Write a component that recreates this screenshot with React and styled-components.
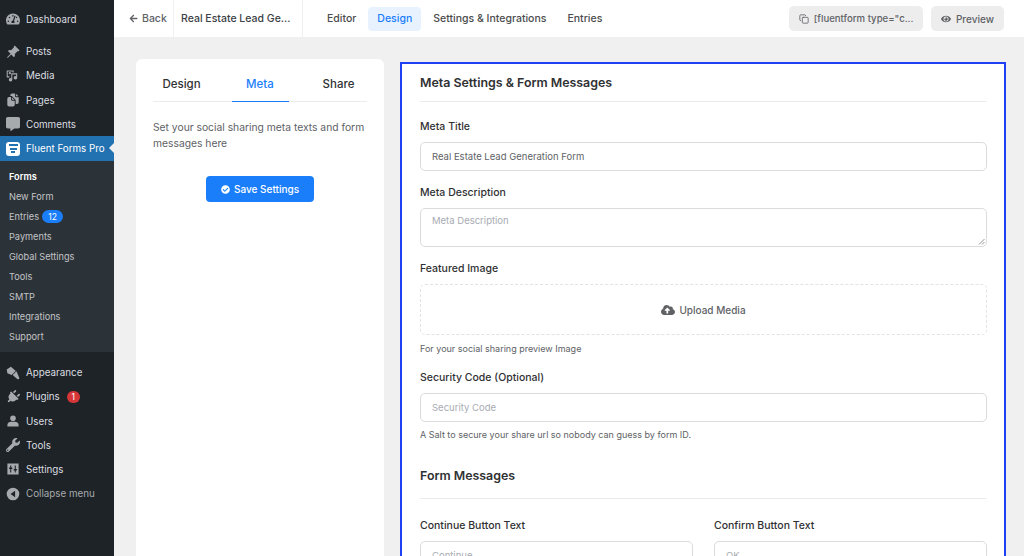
import React from "react";
import styled, { createGlobalStyle } from "styled-components";
import {
  FaTachometerAlt,
  FaCommentAlt,
  FaPlug,
  FaWrench,
  FaEye,
  FaCloudUploadAlt,
  FaCheckCircle,
  FaArrowLeft,
} from "react-icons/fa";
import { BsPinAngleFill } from "react-icons/bs";
import { IoDocuments } from "react-icons/io5";
import { LuCopy } from "react-icons/lu";

const GlobalStyle = createGlobalStyle`
  html, body {
    margin: 0;
    padding: 0;
    height: 100%;
    overflow: hidden;
    background: #f0f0f0;
    font-family: Inter, "Liberation Sans", sans-serif;
  }
  * {
    box-sizing: border-box;
  }
`;

const Page = styled.div`
  display: flex;
  width: 1024px;
  height: 556px;
  overflow: hidden;
`;

const Sidebar = styled.aside`
  flex: 0 0 114px;
  background: #1d2327;
  padding-top: 7px;
  display: flex;
  flex-direction: column;
`;

const MenuGroup = styled.div`
  margin-bottom: ${(p) => p.$gap || 0}px;
`;

const MenuItem = styled.div`
  position: relative;
  height: 24.2px;
  display: flex;
  align-items: center;
  padding-left: 6px;
  gap: 6px;
  font-size: 9.8px;
  white-space: nowrap;
  color: ${(p) => (p.$active ? "#fff" : p.$muted ? "#a7aaad" : "#dcdde0")};
  background: ${(p) => (p.$active ? "#2271b1" : "transparent")};

  & > svg {
    flex: 0 0 14px;
    width: 14px;
    height: 14px;
    color: #a7aaad;
  }

  & > svg.plug {
    transform: rotate(45deg);
  }
`;

const ActiveArrow = styled.span`
  position: absolute;
  right: 0;
  top: 7px;
  border: 5px solid transparent;
  border-right-color: #f0f0f0;
  border-left-width: 0;
`;

const LogoTile = styled.span`
  flex: 0 0 14px;
  width: 14px;
  height: 14px;
  border-radius: 3px;
  background: #fff;
  display: flex;
  flex-direction: column;
  align-items: center;
  justify-content: center;
  gap: 1.5px;
`;

const LogoBar = styled.span`
  display: block;
  height: 2px;
  width: ${(p) => p.$w}px;
  background: #2271b1;
`;

const Submenu = styled.div`
  background: #2c3338;
  padding: 6px 0 5px;
  margin-bottom: 9px;
`;

const SubItem = styled.div`
  height: 20px;
  display: flex;
  align-items: center;
  gap: 3px;
  padding-left: 9px;
  font-size: 9.2px;
  font-weight: ${(p) => (p.$current ? 600 : 400)};
  color: ${(p) => (p.$current ? "#fff" : "#c3c4c7")};
`;

const Badge = styled.span`
  min-width: ${(p) => (p.$red ? 13 : 21)}px;
  height: 12.5px;
  padding: 0 3px;
  border-radius: 7px;
  margin-left: ${(p) => (p.$red ? 1 : 0)}px;
  background: ${(p) => (p.$red ? "#d63638" : "#1a7efb")};
  color: #fff;
  font-size: 8.5px;
  display: inline-flex;
  align-items: center;
  justify-content: center;
`;

const Main = styled.main`
  flex: 1;
  min-width: 0;
  display: flex;
  flex-direction: column;
`;

const TopBar = styled.header`
  height: 37px;
  flex: 0 0 37px;
  background: #fff;
  display: flex;
  align-items: stretch;
  padding-right: 20px;
`;

const BackLink = styled.div`
  width: 60px;
  display: flex;
  align-items: center;
  padding-left: 15px;
  gap: 4px;
  font-size: 10.5px;
  font-weight: 500;
  color: #606266;
  border-right: 1px solid #f0f0f0;

  & svg {
    width: 9px;
    height: 9px;
  }
`;

const FormName = styled.div`
  width: 129px;
  display: flex;
  align-items: center;
  padding-left: 7px;
  font-size: 10.5px;
  font-weight: 500;
  color: #3b3e44;
  border-right: 1px solid #f0f0f0;
  white-space: nowrap;
`;

const TopNav = styled.nav`
  display: flex;
  align-items: center;
  gap: 3px;
  margin-left: 15px;
`;

const TopNavItem = styled.div`
  height: 24px;
  padding: 0 9px;
  display: flex;
  align-items: center;
  border-radius: 4px;
  font-size: 10.5px;
  font-weight: 500;
  color: ${(p) => (p.$active ? "#1a7efb" : "#4b4c4d")};
  background: ${(p) => (p.$active ? "#e8f2ff" : "transparent")};
`;

const TopActions = styled.div`
  margin-left: auto;
  display: flex;
  align-items: center;
  gap: 8px;
`;

const GreyButton = styled.div`
  height: 25px;
  display: flex;
  align-items: center;
  gap: 5px;
  padding: 0 ${(p) => p.$pad || 10}px;
  border-radius: 5px;
  background: #ededed;
  font-size: ${(p) => p.$size || 10}px;
  font-weight: 500;
  color: #606266;
  white-space: nowrap;

  & svg {
    width: 10px;
    height: 10px;
  }
`;

const Content = styled.div`
  flex: 1;
  min-height: 0;
  padding: 22px 19px 0 22px;
  display: flex;
  gap: 16px;
  align-items: flex-start;
  overflow: hidden;
`;

const SideCard = styled.section`
  flex: 0 0 248px;
  height: 520px;
  background: #fff;
  border-radius: 6px;
  padding: 6px 17px;
`;

const Tabs = styled.div`
  display: flex;
  justify-content: space-between;
  height: 37px;
  border-bottom: 1px solid #ececec;
`;

const Tab = styled.div`
  width: ${(p) => p.$w}px;
  display: flex;
  align-items: center;
  justify-content: center;
  padding-top: 1px;
  margin-bottom: -1px;
  font-size: 11.5px;
  font-weight: 500;
  color: ${(p) => (p.$active ? "#1a7efb" : "#303133")};
  border-bottom: 1.5px solid ${(p) => (p.$active ? "#1a7efb" : "transparent")};
`;

const Intro = styled.p`
  margin: 17px 0 0;
  font-size: 10.3px;
  line-height: 16px;
  color: #606266;
`;

const SaveRow = styled.div`
  display: flex;
  justify-content: center;
  margin-top: 25px;
`;

const SaveButton = styled.div`
  width: 108px;
  height: 26px;
  border-radius: 4px;
  background: #1a7efb;
  color: #fff;
  font-size: 10px;
  font-weight: 500;
  display: flex;
  align-items: center;
  justify-content: center;
  gap: 4px;

  & svg {
    width: 9px;
    height: 9px;
  }
`;

const Panel = styled.section`
  flex: 0 0 606px;
  margin-top: 3px;
  height: 560px;
  background: #fff;
  border: 2px solid #1f40f5;
  padding: 0 17px 0 18px;
`;

const PanelTitle = styled.h2`
  margin: ${(p) => p.$mt || 0}px 0 0;
  height: ${(p) => p.$h}px;
  padding-top: ${(p) => p.$pt}px;
  font-size: 12.4px;
  line-height: 20px;
  font-weight: 600;
  color: #303133;
  border-bottom: 1px solid #ececec;
`;

const Field = styled.div`
  margin-top: ${(p) => p.$mt}px;
`;

const Label = styled.div`
  height: 15px;
  line-height: 15px;
  font-size: 10.5px;
  font-weight: 500;
  color: #303133;
  margin-bottom: 8px;
`;

const TextBox = styled.div`
  height: ${(p) => p.$h || 29}px;
  border: 1px solid #dadbdd;
  border-radius: 5px;
  padding: ${(p) => (p.$area ? "6px" : "0")} 11px;
  display: flex;
  align-items: ${(p) => (p.$area ? "flex-start" : "center")};
  font-size: 9.5px;
  color: ${(p) => (p.$filled ? "#606266" : "#a8abb2")};
  position: relative;
  background: #fff;
`;

const Grip = styled.svg`
  position: absolute;
  right: 1px;
  bottom: 1px;
  width: 7px;
  height: 7px;
`;

const UploadBox = styled.div`
  height: 51px;
  margin-top: 2px;
  border: 1px dashed #e2e3e5;
  border-radius: 5px;
  display: flex;
  align-items: center;
  justify-content: center;
  gap: 4px;
  font-size: 10px;
  font-weight: 500;
  color: #606266;

  & svg {
    width: 14px;
    height: 14px;
  }
`;

const Caption = styled.div`
  margin-top: ${(p) => p.$mt || 7}px;
  font-size: 9px;
  line-height: 12px;
  color: #606266;
`;

const TwoCols = styled.div`
  display: grid;
  grid-template-columns: 273px 273px;
  column-gap: 21px;
  margin-top: 19px;
`;

const WP_MEDIA = (
  <svg viewBox="0 0 20 20" fill="currentColor">
    <path d="M1 2h10v3H9.500V3.500h-7v7H5V12H1V2zm5 4h10v6.500a2.500 2.500 0 1 1-1.500-2.300V8H9v7.500a2.500 2.500 0 1 1-1.500-2.300V6H6z" />
    <circle cx="5.500" cy="6" r="1.600" />
  </svg>
);

const WP_APPEARANCE = (
  <svg viewBox="0 0 20 20" fill="currentColor">
    <path d="M1 5 7 1l7 6-6 6-6-2.500z" />
    <path d="M9.500 13 15 7.500l4 9.500a1.700 1.700 0 0 1-2.500 1.800z" />
  </svg>
);

const WP_USERS = (
  <svg viewBox="0 0 20 20" fill="currentColor">
    <circle cx="10" cy="6" r="4" />
    <path d="M2 18v-2.500C2 12.500 5 11 7 11h6c2 0 5 1.500 5 4.500V18H2z" />
  </svg>
);

const WP_SETTINGS = (
  <svg viewBox="0 0 20 20" fill="currentColor">
    <path
      fillRule="evenodd"
      d="M2 2h16v16H2V2zm4 3v3H4.500v2H6v5h1.500v-5H9V8H7.500V5H6zm6.500 0v5H11v2h1.500v3H14v-3h1.500v-2H14V5h-1.500z"
    />
  </svg>
);

const WP_COLLAPSE = (
  <svg viewBox="0 0 20 20" fill="currentColor">
    <path
      fillRule="evenodd"
      d="M10 1a9 9 0 1 1 0 18 9 9 0 0 1 0-18zm3 4.500L6.500 10l6.500 4.500v-9z"
    />
  </svg>
);

const upperMenu = [
  ["Posts", <BsPinAngleFill />],
  ["Media", WP_MEDIA],
  ["Pages", <IoDocuments />],
  ["Comments", <FaCommentAlt />],
];

const subMenu = ["New Form", "Entries", "Payments", "Global Settings", "Tools", "SMTP", "Integrations", "Support"];

export default function App() {
  return (
    <>
      <GlobalStyle />
      <Page>
        <Sidebar>
          <MenuGroup $gap={8.5}>
            <MenuItem>
              <FaTachometerAlt />
              Dashboard
            </MenuItem>
          </MenuGroup>
          <MenuGroup>
            {upperMenu.map(([name, icon]) => (
              <MenuItem key={name}>
                {icon}
                {name}
              </MenuItem>
            ))}
            <MenuItem $active>
              <LogoTile>
                <LogoBar $w={9} />
                <LogoBar $w={7} />
                <LogoBar $w={4} />
              </LogoTile>
              Fluent Forms Pro
              <ActiveArrow />
            </MenuItem>
          </MenuGroup>
          <Submenu>
            <SubItem $current>Forms</SubItem>
            {subMenu.map((name) => (
              <SubItem key={name}>
                {name}
                {name === "Entries" && <Badge>12</Badge>}
              </SubItem>
            ))}
          </Submenu>
          <MenuGroup>
            <MenuItem>
              {WP_APPEARANCE}
              Appearance
            </MenuItem>
            <MenuItem>
              <FaPlug className="plug" />
              Plugins
              <Badge $red>1</Badge>
            </MenuItem>
            <MenuItem>
              {WP_USERS}
              Users
            </MenuItem>
            <MenuItem>
              <FaWrench />
              Tools
            </MenuItem>
            <MenuItem>
              {WP_SETTINGS}
              Settings
            </MenuItem>
            <MenuItem $muted>
              {WP_COLLAPSE}
              Collapse menu
            </MenuItem>
          </MenuGroup>
        </Sidebar>
        <Main>
          <TopBar>
            <BackLink>
              <FaArrowLeft />
              Back
            </BackLink>
            <FormName>Real Estate Lead Ge...</FormName>
            <TopNav>
              <TopNavItem>Editor</TopNavItem>
              <TopNavItem $active>Design</TopNavItem>
              <TopNavItem>Settings &amp; Integrations</TopNavItem>
              <TopNavItem>Entries</TopNavItem>
            </TopNav>
            <TopActions>
              <GreyButton $pad={9.5} $size={9.6}>
                <LuCopy />
                [fluentform type="c...
              </GreyButton>
              <GreyButton>
                <FaEye />
                Preview
              </GreyButton>
            </TopActions>
          </TopBar>
          <Content>
            <SideCard>
              <Tabs>
                <Tab $w={57}>Design</Tab>
                <Tab $w={57} $active>
                  Meta
                </Tab>
                <Tab $w={57}>Share</Tab>
              </Tabs>
              <Intro>Set your social sharing meta texts and form messages here</Intro>
              <SaveRow>
                <SaveButton>
                  <FaCheckCircle />
                  Save Settings
                </SaveButton>
              </SaveRow>
            </SideCard>
            <Panel>
              <PanelTitle $h={38} $pt={9}>
                Meta Settings &amp; Form Messages
              </PanelTitle>
              <Field $mt={17}>
                <Label>Meta Title</Label>
                <TextBox $filled>Real Estate Lead Generation Form</TextBox>
              </Field>
              <Field $mt={14}>
                <Label>Meta Description</Label>
                <TextBox $area $h={39}>
                  Meta Description
                  <Grip viewBox="0 0 7 7">
                    <path d="M6.500 1 1 6.500M6.500 4 4 6.500" stroke="#777" strokeWidth="0.8" />
                  </Grip>
                </TextBox>
              </Field>
              <Field $mt={14}>
                <Label>Featured Image</Label>
                <UploadBox>
                  <FaCloudUploadAlt />
                  Upload Media
                </UploadBox>
                <Caption $mt={8}>For your social sharing preview Image</Caption>
              </Field>
              <Field $mt={15}>
                <Label>Security Code (Optional)</Label>
                <TextBox>Security Code</TextBox>
                <Caption>A Salt to secure your share url so nobody can guess by form ID.</Caption>
              </Field>
              <PanelTitle $h={33} $pt={0} $mt={25}>
                Form Messages
              </PanelTitle>
              <TwoCols>
                <Field $mt={0}>
                  <Label>Continue Button Text</Label>
                  <TextBox>Continue</TextBox>
                </Field>
                <Field $mt={0}>
                  <Label>Confirm Button Text</Label>
                  <TextBox>OK</TextBox>
                </Field>
              </TwoCols>
            </Panel>
          </Content>
        </Main>
      </Page>
    </>
  );
}
